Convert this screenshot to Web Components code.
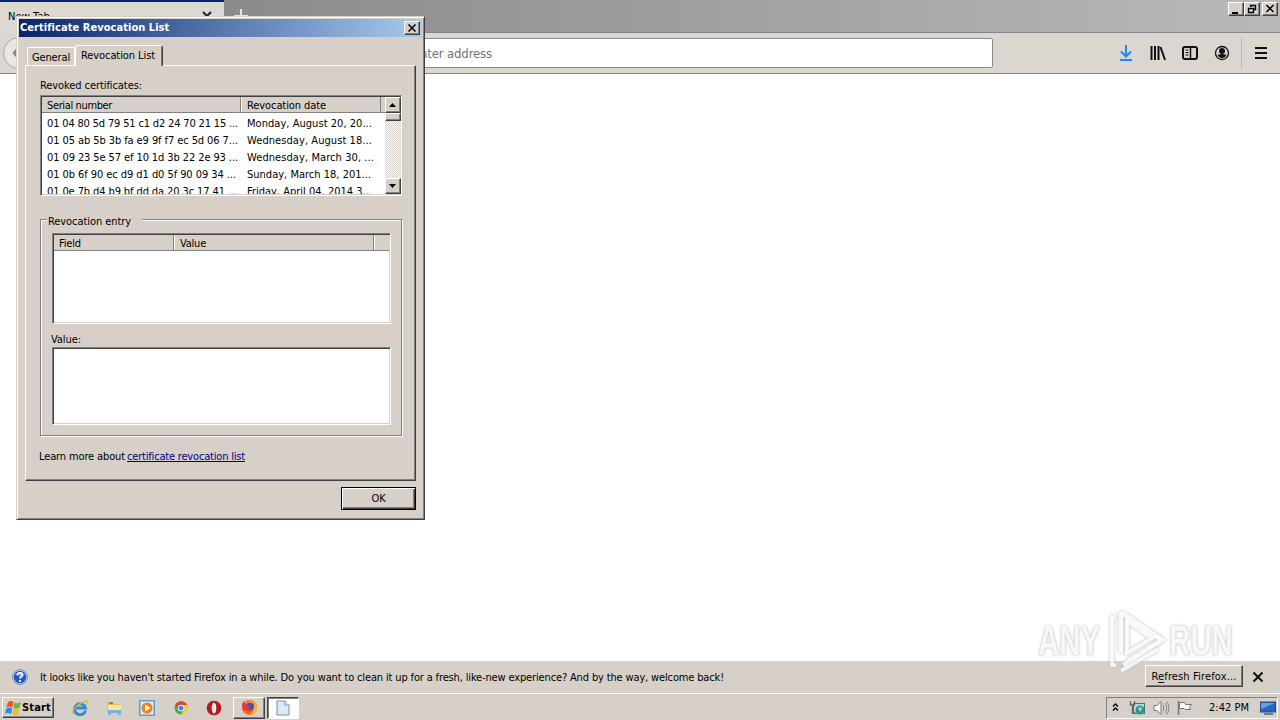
<!DOCTYPE html>
<html lang="en">
<head>
<meta charset="utf-8">
<title>Desktop</title>
<style>
    :root{
        --face:#d6d0c8;
        --light:#ffffff;
        --shadow:#808080;
        --dark:#404040;
        --navy:#0a246a;
    }

    body{
        margin:0;
        width:1280px;
        height:720px;
        overflow:hidden;
        font:11px/14px "DejaVu Sans Condensed", "DejaVu Sans", sans-serif;
        color:#000;
    }
</style>
</head>
<body>
<desktop-screen></desktop-screen>

<script>
class BaseElement extends HTMLElement{

    constructor(){
        super();
        this.attachShadow({mode:"open"});
    }

    connectedCallback(){
        this.shadowRoot.innerHTML = `<style>*{box-sizing:border-box}${this.css}</style>${this.html}`;
    }

    get css(){ return ""; }
    get html(){ return "<slot></slot>"; }
}

class DesktopScreen extends BaseElement{
    get css(){
        return /* css */`
            :host{ display:flex; flex-direction:column; height:720px; position:relative; background:#fff; }
            .page{ flex:1; }
            cert-dialog{ position:absolute; left:16px; top:16px; }
            any-watermark{ position:absolute; left:1036px; top:606px; }
        `;
    }
    get html(){
        return /* html */`
            <tab-strip></tab-strip>
            <nav-toolbar></nav-toolbar>
            <div class="page"></div>
            <notification-bar></notification-bar>
            <task-bar></task-bar>
            <any-watermark></any-watermark>
            <cert-dialog></cert-dialog>
        `;
    }
}

class TabStrip extends BaseElement{
    get css(){
        return /* css */`
            :host{ display:flex; height:33px; background:linear-gradient(90deg,#858585,#8c8c8c 20%,#b9b9b9); border-bottom:1px solid #858585; }
            .tab{ width:224px; height:33px; padding:8px 11px 0 8px; border-top:2px solid var(--navy); background:#dcd9d3; display:flex; justify-content:space-between; }
            .plus{ margin:9px 0 0 10px; }
            .buttons{ margin:2px 2px 0 auto; display:flex; }
            .buttons win-button:last-child{ margin-left:2px; }
        `;
    }
    get html(){
        return /* html */`
            <div class="tab">
                <ui-text w="42">New Tab</ui-text>
                <svg width="12" height="12"><path d="M2 2l8 8M10 2l-8 8" stroke="#222" stroke-width="2"/></svg>
            </div>
            <svg class="plus" width="14" height="14"><path d="M7 0v14M0 7h14" stroke="#e4e4e4" stroke-width="2"/></svg>
            <div class="buttons">
                <win-button style="--w:16px;--h:14px"><svg width="12" height="10"><path d="M2 9h6" stroke="#000" stroke-width="2"/></svg></win-button>
                <win-button style="--w:16px;--h:14px"><svg width="12" height="10"><path d="M4.5 3V1.500h5v4H8M4 1.500h6M2.500 4.500h5v4h-5zM2 4.500h6" fill="none" stroke="#000" stroke-width="1.300"/></svg></win-button>
                <win-button style="--w:16px;--h:14px"><svg width="12" height="10"><path d="M2.500 1l7 7M9.500 1l-7 7" stroke="#000" stroke-width="1.500"/></svg></win-button>
            </div>
        `;
    }
}

class NavToolbar extends BaseElement{
    get css(){
        return /* css */`
            :host{ display:flex; align-items:center; height:41px; padding-right:12px; background:#dbd7d0; border-bottom:1px solid #858585; }
            .back{ margin-left:3px; width:32px; height:32px; border-radius:50%; border:1px solid #aaa7a2; background:#e9e7e3; display:grid; place-items:center; }
            .address{ margin-left:265px; width:693px; height:30px; padding:8px 0 0 112px; border:1px solid #8b8985; border-radius:2px; background:#fff; color:#737373; font-size:13px; }
            .tools{ margin-left:auto; display:flex; align-items:center; gap:16px; }
            .line{ width:1px; height:32px; margin:0 -6px 0 -5px; background:#bab6b0; }
        `;
    }
    get html(){
        return /* html */`
            <span class="back"><svg width="16" height="16"><path d="M8 2L3 8l5 6M3 8h11" fill="none" stroke="#888" stroke-width="2.500"/></svg></span>
            <div class="address"><ui-text w="79">enter address</ui-text></div>
            <div class="tools">
                <svg width="16" height="16"><path d="M8 0v11M3 6.500l5 5 5-5M2 15h12" fill="none" stroke="#1a8cf5" stroke-width="2"/></svg>
                <svg width="16" height="16"><path d="M1.500 1v14M5 1v14M8.500 1v14M10.500 2l4.500 13" fill="none" stroke="#111" stroke-width="2"/></svg>
                <svg width="16" height="16"><rect x="1" y="2" width="14" height="12" rx="2" fill="none" stroke="#111" stroke-width="2"/><path d="M8.500 2v12" stroke="#111" stroke-width="1.500"/><path d="M3.500 5h3M3.500 7.500h3M3.500 10h3" stroke="#111"/></svg>
                <svg width="16" height="16"><circle cx="8" cy="8" r="6.500" fill="none" stroke="#111" stroke-width="1.300"/><circle cx="8" cy="6" r="3" fill="#111"/><path d="M3.500 10Q8 8 12.500 10Q11 13 8 13T3.500 10z" fill="#111"/></svg>
                <span class="line"></span>
                <svg width="16" height="16"><path d="M3 3h12M3 8h12M3 13h12" stroke="#111" stroke-width="2"/></svg>
            </div>
        `;
    }
}

// raised classic button, sized with --w and --h
class WinButton extends BaseElement{
    get css(){
        return /* css */`
            :host{ display:flex; align-items:center; justify-content:center; box-sizing:border-box; width:var(--w); height:var(--h); background:var(--face);
                border:1px solid; border-color:var(--light) var(--dark) var(--dark) var(--light); box-shadow:inset -1px -1px var(--shadow); }
            :host([default]){ border-color:#000; box-shadow:inset 1px 1px var(--light), inset -1px -1px var(--dark), inset -2px -2px var(--shadow); }
            :host([pressed]){ border-color:var(--dark) var(--light) var(--light) var(--dark); box-shadow:inset 1px 1px var(--shadow); background:#fff; }
        `;
    }
}

class ListHeader extends BaseElement{
    get css(){
        return /* css */`
            :host{ display:flex; height:16px; background:var(--face); border-bottom:1px solid var(--shadow); box-sizing:border-box; }
            ::slotted(span){ box-sizing:border-box; height:15px; padding:2px 0 0 5px; line-height:13px; border-left:1px solid var(--light); border-right:1px solid var(--shadow); }
        `;
    }
}

class ScrollBar extends BaseElement{
    get css(){
        return /* css */`
            :host{ display:flex; flex-direction:column; width:16px; background:repeating-conic-gradient(#fff 0 25%,#d6d0c8 0 50%) 0 0/2px 2px; }
            .down{ margin-top:auto; }
        `;
    }
    get html(){
        return /* html */`
            <win-button style="--w:16px;--h:16px"><svg width="8" height="4"><path d="M0 4h7L3.500 0z"/></svg></win-button>
            <win-button style="--w:16px;--h:8px"></win-button>
            <win-button class="down" style="--w:16px;--h:16px"><svg width="8" height="4"><path d="M0 0h7L3.500 4z"/></svg></win-button>
        `;
    }
}

class CertDialog extends BaseElement{
    get css(){
        return /* css */`
            :host{ display:block; box-sizing:border-box; width:409px; height:504px; padding:2px 2px 0; background:var(--face);
                border:1px solid; border-color:var(--face) var(--dark) var(--dark) var(--face); box-shadow:inset 1px 1px var(--light), inset -1px -1px var(--shadow); }
            .title{ display:flex; align-items:center; justify-content:space-between; height:18px; padding:0 2px 0 1px; background:linear-gradient(90deg,var(--navy),#a6caf0); color:#fff; font-weight:bold; }
            .tabs{ display:flex; align-items:flex-end; height:28px; padding-left:8px; }
            .tab{ height:18px; padding:3px 0 0 4px; width:48px; border:solid var(--light); border-width:1px 1px 0 1px; border-radius:2px 2px 0 0; }
            .active{ position:relative; width:88px; height:21px; margin-bottom:-1px; padding:3px 0 0 5px; background:var(--face); border-right-color:var(--dark); box-shadow:inset -1px 0 var(--shadow); }
            .panel{ margin-left:6px; width:391px; height:416px; padding:13px 13px 0 14px; border:1px solid; border-color:var(--light) var(--dark) var(--dark) var(--light); box-shadow:inset -1px -1px var(--shadow); }
            .label{ height:14px; }
            .sunken{ background:#fff; border:1px solid; border-color:var(--shadow) var(--light) var(--light) var(--shadow); box-shadow:inset 1px 1px var(--dark), inset -1px -1px var(--face); padding:1px; }
            .revoked{ margin-top:2px; height:101px; width:362px; display:flex; }
            .list{ flex:1; overflow:hidden; }
            .rows{ padding-top:2px; }
            .row{ display:grid; grid-template-columns:200px 1fr; height:17px; padding:2px 0 0 5px; }
            .group{ position:relative; margin-top:23px; height:217px; width:362px; padding:13px 10px 0 11px; border:1px solid var(--shadow); box-shadow:1px 1px var(--light), inset 1px 1px var(--light); }
            .legend{ position:absolute; left:6px; top:-5px; width:95px; padding-left:1px; background:var(--face); }
            .legend::before{ content:""; position:absolute; left:0; top:-3px; width:100%; height:5px; background:var(--face); z-index:-1; }
            .fields{ height:91px; width:339px; }
            .caption{ margin:9px 0 0 -1px; height:14px; }
            .value{ height:78px; width:339px; }
            .learn{ margin:14px 0 0 -1px; display:flex; gap:2px; }
            a{ color:#00008b; text-decoration:underline; }
            .footer{ display:flex; justify-content:flex-end; padding:6px 6px 0 0; }
        `;
    }
    get rows(){
        return [
            ["01 04 80 5d 79 51 c1 d2 24 70 21 15 ...", 191, "Monday, August 20, 20...", 125],
            ["01 05 ab 5b 3b fa e9 9f f7 ec 5d 06 7...", 191, "Wednesday, August 18...", 125],
            ["01 09 23 5e 57 ef 10 1d 3b 22 2e 93 ...", 191, "Wednesday, March 30, ...", 127],
            ["01 0b 6f 90 ec d9 d1 d0 5f 90 09 34 ...", 189, "Sunday, March 18, 201...", 124],
            ["01 0e 7b d4 b9 bf dd da 20 3c 17 41 ...", 190, "Friday, April 04, 2014 3...", 125]
        ];
    }
    get html(){
        return /* html */`
            <div class="title">
                <ui-text w="149">Certificate Revocation List</ui-text>
                <win-button style="--w:16px;--h:14px"><svg width="10" height="8"><path d="M1.500 .5l7 7M8.500 .5l-7 7" stroke="#000" stroke-width="1.500"/></svg></win-button>
            </div>
            <div class="tabs">
                <div class="tab"><ui-text w="38">General</ui-text></div>
                <div class="tab active"><ui-text w="74">Revocation List</ui-text></div>
            </div>
            <div class="panel">
                <div class="label"><ui-text w="102">Revoked certificates:</ui-text></div>
                <div class="sunken revoked" style="padding:1px 0 1px 1px">
                    <div class="list">
                        <list-header>
                            <span style="width:199px;border-left:0"><ui-text w="65">Serial number</ui-text></span>
                            <span style="width:140px"><ui-text w="79">Revocation date</ui-text></span>
                        </list-header>
                        <div class="rows">
                            ${this.rows.map(([serial, sw, date, dw]) => `<div class="row"><span><ui-text w="${sw}">${serial}</ui-text></span><span><ui-text w="${dw}">${date}</ui-text></span></div>`).join("")}
                        </div>
                    </div>
                    <scroll-bar></scroll-bar>
                </div>
                <div class="group">
                    <div class="legend"><ui-text w="83">Revocation entry</ui-text></div>
                    <div class="sunken fields">
                        <list-header>
                            <span style="width:120px;border-left:0"><ui-text w="22">Field</ui-text></span>
                            <span style="width:200px"><ui-text w="26">Value</ui-text></span>
                            <span style="width:15px;border-right:0"></span>
                        </list-header>
                    </div>
                    <div class="caption"><ui-text w="30">Value:</ui-text></div>
                    <div class="sunken value"></div>
                </div>
                <div class="learn"><ui-text w="86">Learn more about</ui-text><a><ui-text w="118">certificate revocation list</ui-text></a></div>
            </div>
            <div class="footer"><win-button default style="--w:75px;--h:23px"><ui-text w="14">OK</ui-text></win-button></div>
        `;
    }
}

class NotificationBar extends BaseElement{
    get css(){
        return /* css */`
            :host{ display:flex; align-items:center; height:32px; box-sizing:border-box; padding:0 15px 0 12px; background:var(--face); }
            .message{ margin:1px 0 0 12px; }
            win-button{ margin:-2px 8px 0 auto; }
            u{ text-underline-offset:2px; }
        `;
    }
    get html(){
        return /* html */`
            <svg width="16" height="16"><circle cx="8" cy="8" r="7.500" fill="#c7d8f3" stroke="#7593c5"/><circle cx="8" cy="8" r="6.300" fill="#2555bd"/><path d="M3 6Q8 0 13 6Q8 8 3 6" fill="#6b94e2"/><path d="M5.500 6Q5.500 3.800 8 3.800T10.500 6C10.500 7.500 8 7.500 8 9.500M8 11v2" fill="none" stroke="#fff" stroke-width="1.800"/></svg>
            <ui-text class="message" w="684">It looks like you haven't started Firefox in a while. Do you want to clean it up for a fresh, like-new experience? And by the way, welcome back!</ui-text>
            <win-button style="--w:98px;--h:22px"><ui-text w="85" style="margin-top:1px">R<u>e</u>fresh Firefox...</ui-text></win-button>
            <svg width="14" height="12"><path d="M2.500 1.500l9 9M11.500 1.500l-9 9" stroke="#111" stroke-width="2"/></svg>
        `;
    }
}

class TaskBar extends BaseElement{
    get css(){
        return /* css */`
            :host{ display:flex; align-items:center; height:27px; box-sizing:border-box; padding:1px 2px 0; background:var(--face); border-top:1px solid var(--light); }
            .start{ font-weight:bold; }
            .launch{ display:flex; gap:17.5px; margin-left:18px; }
            .windows{ display:flex; gap:2px; margin-left:11px; }
            .tray{ margin-left:auto; display:flex; align-items:center; width:172px; height:22px; padding:0 0 0 5px; border:1px solid; border-color:var(--shadow) var(--light) var(--light) var(--shadow); }
            svg{ flex:none; }
        `;
    }
    get html(){
        return /* html */`
            <win-button class="start" style="--w:52px;--h:21px">
                <svg width="17" height="16" viewBox="0 0 17 16"><path d="M3 2Q6 0 8.500 2L7.500 7.500Q5 5.500 1.500 7.500z" fill="#e5552c"/><path d="M9.500 2.500Q12.500 4 16 2L14.500 8Q11 9.500 8.500 8z" fill="#70b344"/><path d="M1.300 8.500Q5 6.500 7.300 8.500L6 14Q3 12 0 14z" fill="#318bd0"/><path d="M8.300 9Q11 10.500 14.300 9L13 14.500Q10 16 7 14.500z" fill="#f3b82b"/></svg>
                <ui-text w="29">Start</ui-text>
            </win-button>
            <div class="launch">
                <svg width="16" height="16"><path d="M13.500 10.500A5.500 5.500 0 1 1 13.500 8H4" fill="none" stroke="#2e8cd8" stroke-width="3"/><path d="M1 14Q-1 11 5 6T15 1Q16 2 14 5" fill="none" stroke="#e9b72c" stroke-width="1.300"/></svg>
                <svg width="16" height="16"><path d="M1 2h6l1 2h6v8H1z" fill="#e9bf55"/><path d="M2 5h13v7H2z" fill="#f9e7a0"/><path d="M3 3h4" stroke="#55a455" stroke-width="2"/><path d="M2 10h13v5h-3v-2H5v2H2z" fill="#77b5df"/></svg>
                <svg width="16" height="16"><rect x=".5" y=".5" width="15" height="15" fill="#9dc7e8" stroke="#5b9cce"/><rect x="2" y="2" width="12" height="12" fill="#d8ebf7"/><circle cx="8" cy="8" r="5.500" fill="#ee8016"/><path d="M6 4.500L11.500 8 6 11.500z" fill="#fff"/></svg>
                <svg width="16" height="16"><circle cx="8" cy="8" r="6.500" fill="#4aa952"/><path d="M2.300 5A6.500 6.500 0 0 1 14 5H8v3L5 10z" fill="#df4537"/><path d="M8 5h6.200A6.500 6.500 0 0 1 8 14.500L11 9z" fill="#f7cb35"/><circle cx="8" cy="8" r="3.300" fill="#fff"/><circle cx="8" cy="8" r="2.500" fill="#438aed"/></svg>
                <svg width="16" height="16"><circle cx="8" cy="8" r="7.300" fill="#b51820"/><ellipse cx="8" cy="8" rx="2.300" ry="5.500" fill="#f2e9e7"/></svg>
            </div>
            <div class="windows">
                <win-button style="--w:32px;--h:22px"><svg width="17" height="17"><circle cx="8.500" cy="8.500" r="7.500" fill="#f06a25"/><path d="M3 3Q5 1 5 4L9 2Q15 3 16 8Q16 14 9 16Q13 13 12 9Q11 5 7 6z" fill="#f7b52c"/><circle cx="9" cy="7.500" r="4" fill="#4c4bbd"/><path d="M1 5L3 2l2 4 4 1-2 2 4 2Q8 14 5 11L2 12z" fill="#e33a35"/></svg></win-button>
                <win-button pressed style="--w:32px;--h:22px"><svg width="14" height="16"><path d="M1 1h8l4 4v10H1z" fill="#dce9fa" stroke="#6f8dbe"/><path d="M9 1v4h4" fill="#fff" stroke="#6f8dbe"/></svg></win-button>
            </div>
            <div class="tray">
                <svg width="8" height="12"><path d="M1 4.500L3.500 2 6 4.500M1 8.500L3.500 6 6 8.500" fill="none" stroke="#000" stroke-width="1.400"/></svg>
                <svg width="17" height="16" style="margin-left:9px"><rect x="4.500" y="3.500" width="11" height="10" fill="#b4dcda" stroke="#487075"/><circle cx="11" cy="10" r="4.500" fill="#279893"/><path d="M9 8l3-1 1 2-2 3" fill="#a0dec4"/><path d="M1.500 1v4h4V1M3.500 5v8h3" fill="none" stroke="#666" stroke-width="1.300"/></svg>
                <svg width="17" height="16" style="margin-left:7px"><path d="M1 5.500h3L8 1.500v13L4 10.500H1z" fill="#f8f8f8" stroke="#777"/><path d="M10 5Q12 8 10 11M12 3Q15.500 8 12 13M14 1.500Q18 8 14 14.500" fill="none" stroke="#858585"/></svg>
                <svg width="16" height="16" style="margin-left:7px"><path d="M1.500 1v14" stroke="#777" stroke-width="1.500"/><path d="M2.500 2.500h5l1 2h6l-2 3 1 2H8l-1-1H2.500z" fill="#fafafa" stroke="#777"/></svg>
                <ui-text w="40" style="margin-left:16px">2:42 PM</ui-text>
                <svg width="16" height="16" style="margin-left:11px"><rect x=".5" y="2" width="15" height="10" fill="#2864c2" stroke="#234a86"/><path d="M1 3h14L1 9z" fill="#63a0e8"/><path d="M4 14h9" stroke="#667b98" stroke-width="2"/></svg>
            </div>
        `;
    }
}

class AnyWatermark extends BaseElement{
    get css(){
        return /* css */`
            :host{ display:flex; align-items:center; width:198px; height:70px; opacity:.85; }
            span{ width:66px; font:bold 42px/46px "Liberation Sans", sans-serif; color:#f7f7f7; text-shadow:0 0 2px #aaa, 0 0 4px #ccc; display:flex; justify-content:center; transform:scaleX(.7); }
            svg{ flex:none; margin:0 1px; filter:drop-shadow(0 0 1.500px #aaa); overflow:visible; }
        `;
    }
    get html(){
        return /* html */`
            <span>ANY</span>
            <svg width="64" height="68"><path d="M18 5v41M18 5L59 33 20 58" fill="none" stroke="#f8f8f8" stroke-width="5"/><path d="M13 10h-4v48h4M24 14v32l25-15zM18 64l37-22" fill="none" stroke="#f8f8f8" stroke-width="4"/></svg>
            <span>RUN</span>
        `;
    }
}

// spreads a line of text over w pixels with letter-spacing
class UiText extends BaseElement{
    connectedCallback(){
        super.connectedCallback();
        const width = Number(this.getAttribute("w"));
        const natural = this.getBoundingClientRect().width;
        this.style.letterSpacing = `${(width - natural) / this.textContent.length}px`;
    }
    get css(){
        return ":host{ display:inline-block; flex:none; white-space:pre; text-decoration:inherit; }";
    }
}

customElements.define("desktop-screen", DesktopScreen);
customElements.define("tab-strip", TabStrip);
customElements.define("nav-toolbar", NavToolbar);
customElements.define("win-button", WinButton);
customElements.define("list-header", ListHeader);
customElements.define("scroll-bar", ScrollBar);
customElements.define("cert-dialog", CertDialog);
customElements.define("notification-bar", NotificationBar);
customElements.define("task-bar", TaskBar);
customElements.define("any-watermark", AnyWatermark);
customElements.define("ui-text", UiText);
</script>
</body>
</html>
